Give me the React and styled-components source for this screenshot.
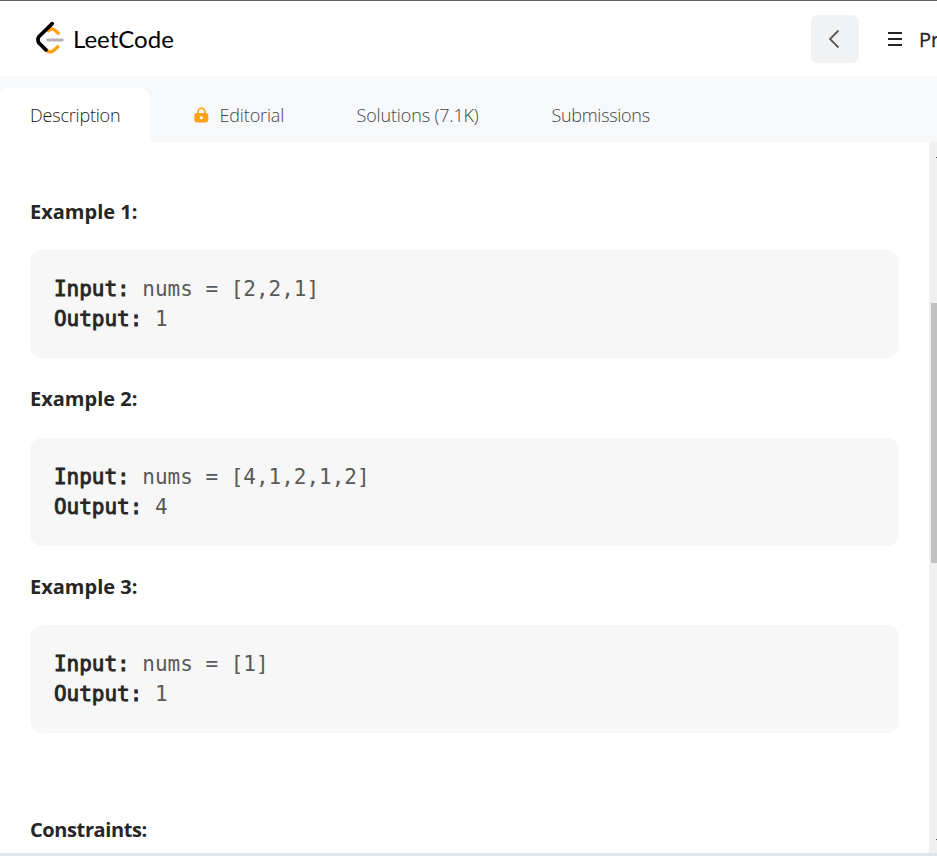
import React from "react";
import styled, { createGlobalStyle } from "styled-components";

const GlobalStyle = createGlobalStyle`
  * { box-sizing: border-box; }
  body { margin: 0; background: #fff; overflow: hidden; font-family: "Open Sans", "Noto Sans", sans-serif; }
`;

const Page = styled.div`
  width: 937px;
  height: 856px;
  display: flex;
  flex-direction: column;
  overflow: hidden;
  border-top: 1px solid #5f5f61;
`;

const Header = styled.header`
  height: 75px;
  flex: none;
  display: flex;
  align-items: center;
  justify-content: space-between;
  padding-left: 36px;
`;

const Brand = styled.div`
  display: flex;
  align-items: center;
  gap: 7px;
  padding-bottom: 2px;
`;

const BrandMark = styled.svg`
  width: 30px;
  height: 36px;
  display: block;
`;

const BrandName = styled.span`
  font: 400 24px/30px Lato, sans-serif;
  letter-spacing: 0;
  color: #000;
  padding-top: 2px;
`;

const HeaderActions = styled.div`
  display: flex;
  align-items: center;
  width: 126px;
  overflow: hidden;
`;

const BackButton = styled.button`
  width: 48px;
  height: 48px;
  flex: none;
  border: 0;
  border-radius: 7px;
  background: #f1f2f4;
  padding: 0 2px 0 0;
  display: grid;
  place-items: center;
`;

const MenuIcon = styled.svg`
  flex: none;
  margin: 0 17px 0 29px;
`;

const ProblemLabel = styled.span`
  font-size: 20px;
  font-weight: 500;
  color: #262626;
  -webkit-text-stroke: 0.3px #262626;
  white-space: nowrap;
  padding-top: 1px;
`;

const Tabs = styled.nav`
  height: 66px;
  flex: none;
  background: #f7f8fa;
  display: flex;
  align-items: flex-end;
`;

const Tab = styled.div`
  width: ${(p) => p.$width}px;
  height: 54px;
  padding-left: ${(p) => p.$inset}px;
  display: flex;
  align-items: center;
  gap: 11px;
  white-space: nowrap;
  font-size: 18px;
  font-weight: 300;
  letter-spacing: ${(p) => p.$tracking || 0}px;
  color: ${(p) => (p.$active ? "#1a1a1a" : "#444")};
  background: ${(p) => (p.$active ? "#fff" : "transparent")};
  border-radius: 0 10px 0 0;
  border-top-left-radius: ${(p) => (p.$active ? 8 : 0)}px;
`;

const Body = styled.div`
  flex: 1;
  min-height: 0;
  display: flex;
`;

const Content = styled.main`
  flex: 1;
  padding: 54px 30px 0;
  overflow: hidden;
`;

const Example = styled.section`
  height: 187.45px;
`;

const Heading = styled.h2`
  margin: 0;
  font-size: 20px;
  line-height: 32px;
  font-weight: 700;
  letter-spacing: ${(p) => p.$tracking || 0}px;
  color: #262626;
`;

const CodeBlock = styled.pre`
  margin: 22.12px 0 0;
  height: 108px;
  padding: 24px;
  border-radius: 12px;
  background: #f7f7f7;
  color: #595959;
  font: 400 21px/30px "DejaVu Sans Mono", monospace;
  letter-spacing: -0.02px;
`;

const CodeLabel = styled.strong`
  color: #262626;
  font-weight: 400;
  -webkit-text-stroke: 0.9px #262626;
`;

const Constraints = styled.section`
  padding-top: 55.65px;
`;

const ScrollTrack = styled.div`
  width: 8px;
  background: #f0f0f0;
  display: flex;
  flex-direction: column;
  align-items: flex-end;
  justify-content: space-between;
  padding: 15px 0 13px;
`;

const ScrollArrow = styled.div`
  width: 1px;
  height: 1px;
  background: #505050;
`;

const ScrollThumb = styled.div`
  width: 6px;
  height: 260px;
  margin-bottom: 131px;
  background: #c1c1c1;
`;

const BottomEdge = styled.div`
  height: 3px;
  flex: none;
  background: #dfe5e9;
`;

const examples = [
  { input: "[2,2,1]", output: "1" },
  { input: "[4,1,2,1,2]", output: "4" },
  { input: "[1]", output: "1" },
];

function Logo() {
  return (
    <BrandMark viewBox="0 0 30 36" fill="none" strokeWidth="3.4" strokeLinecap="round" strokeLinejoin="round">
      <path d="M12.5 10.7Q16 7.6 19 10.3L22.3 13.2" stroke="#ffa116" />
      <path d="M10.5 30.3Q13.8 33.5 17.5 30.7L21.8 26.8" stroke="#ffa116" />
      <path d="M11.6 20H26.3" stroke="#b3b3b3" strokeWidth="2.8" />
      <path d="M16.2 3.6L3 16.5Q0.9 19.7 3 23L9.9 29.9" stroke="#000" strokeWidth="3.7" />
    </BrandMark>
  );
}

function LockIcon() {
  return (
    <svg width="15" height="16" viewBox="0 0 15 16">
      <path d="M4 7V4.8a3.5 3.5 0 0 1 7 0V7" fill="none" stroke="#ffa116" strokeWidth="1.6" />
      <rect x=".3" y="6" width="14" height="9.4" rx="2.4" fill="#ffa116" />
      <circle cx="7.3" cy="10.7" r="1.5" fill="#fff" />
    </svg>
  );
}

export default function App() {
  return (
    <Page>
      <GlobalStyle />
      <Header>
        <Brand>
          <Logo />
          <BrandName>LeetCode</BrandName>
        </Brand>
        <HeaderActions>
          <BackButton aria-label="Back">
            <svg width="12" height="20" viewBox="0 0 12 20" fill="none" stroke="#595959" strokeWidth="1.8">
              <path d="M10.5 1.5L2 10L10.5 18.5" />
            </svg>
          </BackButton>
          <MenuIcon width="14" height="16" viewBox="0 0 14 16" stroke="#262626" strokeWidth="2">
            <path d="M0 2H14M0 8H14M0 14H14" />
          </MenuIcon>
          <ProblemLabel>Pr</ProblemLabel>
        </HeaderActions>
      </Header>
      <Tabs>
        <Tab $active $width={150} $inset={30} $tracking={-0.2}>Description</Tab>
        <Tab $width={176} $inset={43.5} $tracking={-0.15}>
          <LockIcon />
          Editorial
        </Tab>
        <Tab $width={195} $inset={30.5} $tracking={-0.15}>Solutions (7.1K)</Tab>
        <Tab $width={160} $inset={30.5} $tracking={-0.3}>Submissions</Tab>
      </Tabs>
      <Body>
        <Content>
          {examples.map((example, index) => (
            <Example key={index}>
              <Heading>Example {index + 1}:</Heading>
              <CodeBlock>
                <CodeLabel>Input:</CodeLabel> nums = {example.input}
                {"\n"}
                <CodeLabel>Output:</CodeLabel> {example.output}
              </CodeBlock>
            </Example>
          ))}
          <Constraints>
            <Heading $tracking={-0.4}>Constraints:</Heading>
          </Constraints>
        </Content>
        <ScrollTrack>
          <ScrollArrow />
          <ScrollThumb />
          <ScrollArrow />
        </ScrollTrack>
      </Body>
      <BottomEdge />
    </Page>
  );
}
